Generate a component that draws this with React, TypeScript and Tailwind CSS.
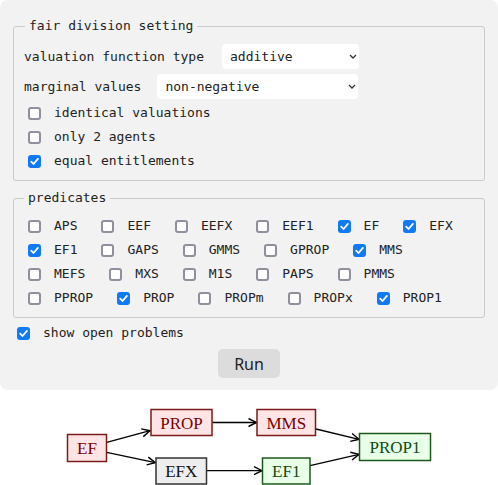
import { FC } from "react";

const Check: FC<{ checked?: boolean }> = ({ checked }) => (
  <span className="relative inline-flex ml-[4px] w-[13px] h-[13px] shrink-0">
    <input
      type="checkbox"
      defaultChecked={checked}
      className={
        "appearance-none w-[13px] h-[13px] rounded-[3px] border-2 " +
        (checked ? "bg-[#1079f5] border-[#1079f5]" : "bg-white border-[#8f8f9d]")
      }
    />
    {checked && (
      <svg
        viewBox="0 0 13 13"
        className="absolute inset-0 w-[13px] h-[13px] pointer-events-none"
      >
        <path d="M3.2 6.6 L5.5 9 L9.9 3.9" fill="none" stroke="white" strokeWidth="1.8" strokeLinecap="round" strokeLinejoin="round" />
      </svg>
    )}
  </span>
);

const Item: FC<{ label: string; checked?: boolean }> = ({ label, checked }) => (
  <label className="flex items-center h-[24px] whitespace-pre">
    <Check checked={checked} />
    <span className="ml-[13px]">{label}</span>
  </label>
);

const Select: FC<{ value: string; options: string[]; width: string }> = ({ value, options, width }) => (
  <div className={"relative h-[25px] " + width}>
    <select
      defaultValue={value}
      className="appearance-none w-full h-full bg-white rounded-[4px] pl-[8px] text-[13px] text-[#222] outline-none font-['DejaVu_Sans_Mono',monospace]"
    >
      {options.map((o) => (
        <option key={o}>{o}</option>
      ))}
    </select>
    <svg viewBox="0 0 8 5" className="absolute right-[2px] top-[10px] w-[8px] h-[5px] mr-[0px] pointer-events-none" style={{ right: 2 }}>
      <path d="M1 1 L4 4 L7 1" fill="none" stroke="#333" strokeWidth="1.3" />
    </svg>
  </div>
);

const predicateRows: [string, boolean][][] = [
  [["APS", false], ["EEF", false], ["EEFX", false], ["EEF1", false], ["EF", true], ["EFX", true]],
  [["EF1", true], ["GAPS", false], ["GMMS", false], ["GPROP", false], ["MMS", true]],
  [["MEFS", false], ["MXS", false], ["M1S", false], ["PAPS", false], ["PMMS", false]],
  [["PPROP", false], ["PROP", true], ["PROPm", false], ["PROPx", false], ["PROP1", true]],
];

const Graph: FC = () => {
  const pink = { fill: "#ffe5e5", stroke: "#7d1a1a", text: "#7a0000" };
  const green = { fill: "#e8ffe8", stroke: "#1c5a1c", text: "#0d4d0d" };
  const grey = { fill: "#eeeeee", stroke: "#333333", text: "#111111" };
  const nodes = [
    { id: "EF", x: 67.5, y: 434.5, w: 39, h: 27, c: pink },
    { id: "PROP", x: 151, y: 409.5, w: 61, h: 26, c: pink },
    { id: "EFX", x: 156, y: 458, w: 50.5, h: 26, c: grey },
    { id: "MMS", x: 257, y: 409.5, w: 58.5, h: 26, c: pink },
    { id: "EF1", x: 262.5, y: 458, w: 47.5, h: 26, c: green },
    { id: "PROP1", x: 359.5, y: 433.5, w: 71, h: 27, c: green },
  ];
  const edges = [
    [106.7, 442.3, 150, 430.7],
    [106.7, 452.3, 155.3, 462.7],
    [212.3, 422.5, 256.5, 422.5],
    [206.7, 470.7, 262, 470.7],
    [316, 429, 359, 439.3],
    [310, 465.7, 359, 454.3],
  ];
  return (
    <svg viewBox="0 390 498 95" className="block w-[498px] h-[95px]">
      <defs>
        <marker id="vee" markerWidth="10" markerHeight="10" refX="9" refY="5" orient="auto" markerUnits="userSpaceOnUse">
          <path d="M1 1 L9 5 L1 9" fill="none" stroke="#000" strokeWidth="1.4" />
        </marker>
      </defs>
      {edges.map(([x1, y1, x2, y2], i) => (
        <line key={i} x1={x1} y1={y1} x2={x2} y2={y2} stroke="#000" strokeWidth="1.3" markerEnd="url(#vee)" />
      ))}
      {nodes.map((n) => (
        <g key={n.id}>
          <rect x={n.x} y={n.y} width={n.w} height={n.h} fill={n.c.fill} stroke={n.c.stroke} strokeWidth="1.5" />
          <text
            x={n.x + n.w / 2}
            y={n.y + n.h / 2 + 6}
            textAnchor="middle"
            fontFamily="'Liberation Serif', serif"
            fontSize="17"
            fill={n.c.text}
          >
            {n.id}
          </text>
        </g>
      ))}
    </svg>
  );
};

export default function App() {
  return (
    <div className="w-[498px] bg-white">
      <div className="bg-[#f2f2f2] rounded-[8px] px-[13px] pt-[18px] pb-[12px] text-[13px] leading-[16px] text-[#222] font-['DejaVu_Sans_Mono',monospace]">
        <fieldset className="border border-[#cacaca] rounded-[3px] px-[10px] pt-[10px] pb-[7px]">
          <legend className="ml-[1px] px-[4px] leading-[16px]">fair division setting</legend>
          <div className="flex items-center h-[25px]">
            <span>valuation function type</span>
            <div className="ml-[18px]">
              <Select value="additive" options={["additive", "general"]} width="w-[137px]" />
            </div>
          </div>
          <div className="flex items-center h-[25px] mt-[5px]">
            <span>marginal values</span>
            <div className="ml-[16px]">
              <Select value="non-negative" options={["non-negative", "non-positive", "any"]} width="w-[201px]" />
            </div>
          </div>
          <div className="mt-[2px] flex flex-col">
            <Item label="identical valuations" />
            <Item label="only 2 agents" />
            <Item label="equal entitlements" checked />
          </div>
        </fieldset>

        <fieldset className="mt-[9px] border border-[#cacaca] rounded-[3px] px-[10px] pt-[8px] pb-[7px]">
          <legend className="px-[4px] leading-[16px]">predicates</legend>
          <div className="flex flex-col">
            {predicateRows.map((row, i) => (
              <div key={i} className="flex gap-[20px]">
                {row.map(([name, on]) => (
                  <Item key={name} label={name} checked={on} />
                ))}
              </div>
            ))}
          </div>
        </fieldset>

        <div className="mt-[3px]">
          <Item label="show open problems" checked />
        </div>

        <div className="mt-[4px] flex justify-center">
          <button className="w-[62px] h-[29px] rounded-[5px] bg-[#dcdcdc] text-[16px] text-[#222] font-['Noto_Sans',sans-serif]">
            Run
          </button>
        </div>
      </div>
      <Graph />
    </div>
  );
}
